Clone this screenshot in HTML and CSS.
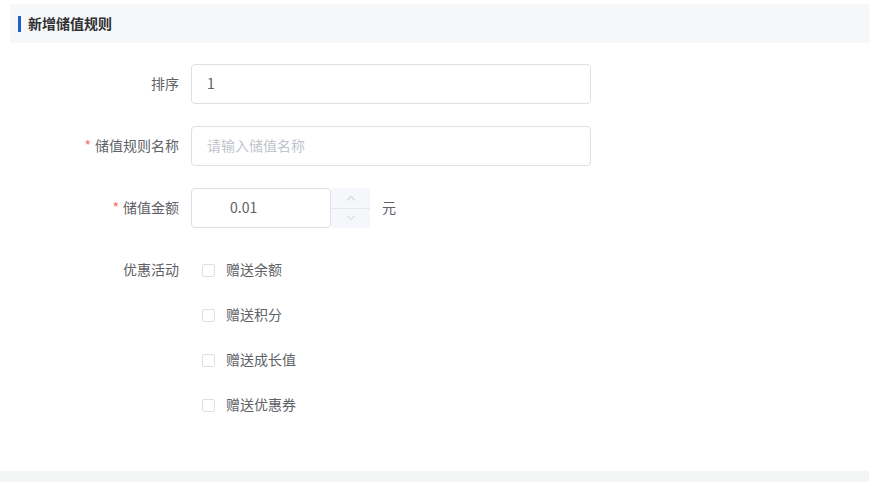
FILE: index.html
```html
<!DOCTYPE html>
<html lang="zh-CN">
<head>
<meta charset="utf-8">
<link rel="stylesheet" href="styles.css">
</head>
<body>
<div class="page">
  <div class="panel-head"><span class="bar"></span><span class="panel-title">新增储值规则</span></div>
  <form class="form">
    <div class="item">
      <label class="label">排序</label>
      <div class="control"><div class="input">1</div></div>
    </div>
    <div class="item">
      <label class="label"><span class="req">*</span>储值规则名称</label>
      <div class="control"><div class="input placeholder">请输入储值名称</div></div>
    </div>
    <div class="item">
      <label class="label"><span class="req">*</span>储值金额</label>
      <div class="control">
        <div class="num">
          <div class="num-input">0.01</div>
          <div class="num-ctrl">
            <span class="arrow up"><svg width="10" height="6" viewBox="0 0 10 6"><path d="M1 5.5 L5 1.5 L9 5.5" fill="none" stroke="#b8bcc4" stroke-width="1"/></svg></span>
            <span class="arrow down"><svg width="10" height="6" viewBox="0 0 10 6"><path d="M1 0.5 L5 4.5 L9 0.5" fill="none" stroke="#c8ccd3" stroke-width="1"/></svg></span>
          </div>
        </div>
        <span class="unit">元</span>
      </div>
    </div>
    <div class="item item-check">
      <label class="label">优惠活动</label>
      <div class="checks">
        <div class="check"><span class="box"></span><span class="check-text">赠送余额</span></div>
        <div class="check"><span class="box"></span><span class="check-text">赠送积分</span></div>
        <div class="check"><span class="box"></span><span class="check-text">赠送成长值</span></div>
        <div class="check"><span class="box"></span><span class="check-text">赠送优惠券</span></div>
      </div>
    </div>
  </form>
</div>
<div class="footer"></div>
</body>
</html>
```

FILE: styles.css
```css
* { box-sizing: border-box; }
html, body { margin: 0; padding: 0; background: #fff; }
body {
  font-family: "Noto Sans CJK SC", "Liberation Sans", sans-serif;
  font-size: 14px;
  color: #606266;
}
.page { height: 471px; padding-top: 4px; }
.panel-head {
  margin-left: 10px;
  height: 39px;
  background: #f6f7f8;
  display: flex;
  align-items: center;
  padding-left: 8px;
}
.bar { width: 3px; height: 16px; background: #1d5fd1; margin-right: 7px; }
.panel-title { font-size: 14px; font-weight: bold; color: #303133; line-height: 18px; padding-bottom: 1px; }
.form { padding-top: 21px; }
.item { display: flex; margin-bottom: 22px; }
.label {
  width: 179px;
  text-align: right;
  line-height: 38px;
  padding-bottom: 2px;
  margin-right: 12px;
  color: #606266;
}
.req { color: #f56c6c; margin-right: 4px; }
.control { display: flex; align-items: center; height: 40px; }
.input {
  width: 400px;
  height: 40px;
  border: 1px solid #dcdfe6;
  border-radius: 4px;
  padding-left: 15px;
  line-height: 36px;
  padding-bottom: 2px;
  color: #606266;
}
.placeholder { color: #c0c4cc; }
.num { display: flex; height: 40px; }
.num-input {
  width: 140px;
  height: 40px;
  border: 1px solid #dcdfe6;
  border-radius: 4px;
  line-height: 36px;
  padding-bottom: 2px;
  padding-left: 38px;
  color: #606266;
}
.num-ctrl {
  width: 39px;
  height: 40px;
  background: #f5f7fa;
  border-radius: 0 4px 4px 0;
  display: flex;
  flex-direction: column;
}
.arrow { flex: 1; display: flex; align-items: center; justify-content: center; }
.arrow.up { border-bottom: 1px solid #e4e7ed; }
.unit { margin-left: 12px; color: #606266; padding-bottom: 2px; }
.item-check { margin-bottom: 0; }
.checks { display: flex; flex-direction: column; padding-left: 11px; }
.check { display: flex; align-items: center; height: 40px; margin-bottom: 5px; }
.box {
  width: 13px;
  height: 13px;
  border: 1px solid #dcdfe6;
  border-radius: 2px;
  margin-right: 11px;
  background: #fff;
}
.check-text { color: #606266; line-height: 18px; padding-bottom: 2px; }
.footer { height: 11px; background: #f4f5f5; }
```
